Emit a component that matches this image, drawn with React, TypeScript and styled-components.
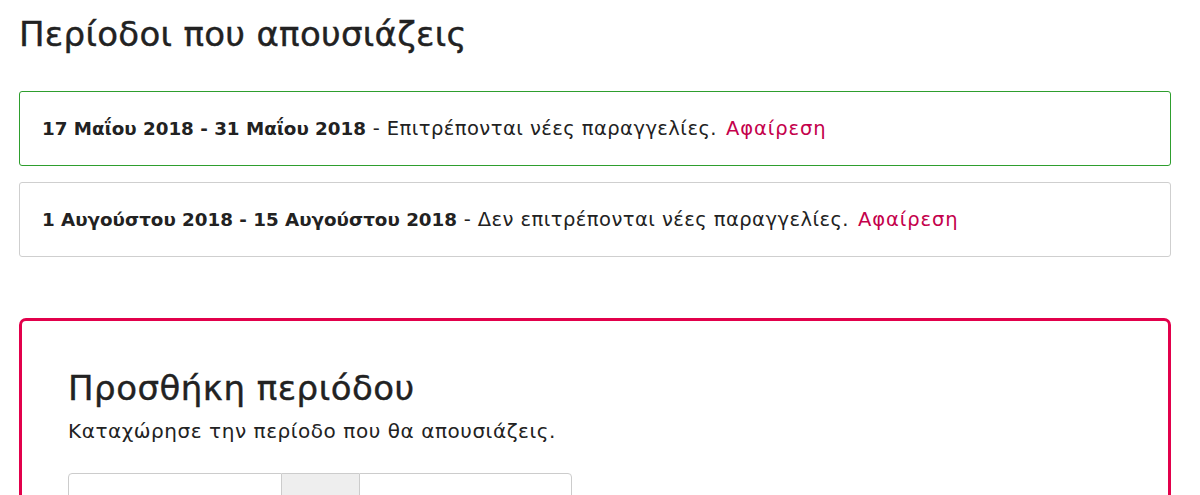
import styled, { createGlobalStyle } from "styled-components";

const GlobalStyle = createGlobalStyle`
  body {
    margin: 0;
    background: #fff;
    color: #222;
    font-family: "DejaVu Sans", Verdana, sans-serif;
  }
`;

const Page = styled.div`
  padding: 0 29px 0 19px;
`;

const Title = styled.h1`
  margin: 0;
  padding-top: 16px;
  font-size: 34px;
  font-weight: 400;
  letter-spacing: 0.3px;
  line-height: 37px;
  color: #222;
  -webkit-text-stroke: 0.4px #222;
`;

const PeriodList = styled.div`
  display: flex;
  flex-direction: column;
  gap: 16px;
  margin-top: 38px;
`;

const PeriodCard = styled.div<{ $active?: boolean }>`
  border: 1px solid ${(p) => (p.$active ? "#2e9e2e" : "#cfcfcf")};
  border-radius: 3px;
  padding: 24px 22px;
  font-size: 19.5px;
  letter-spacing: 0.45px;
  line-height: 25px;
`;

const Dates = styled.strong`
  font-weight: 700;
  font-size: 18.3px;
  letter-spacing: 0;
`;

const RemoveLink = styled.a`
  color: #c4004b;
  text-decoration: none;
  margin-left: 9px;
  letter-spacing: 0.9px;
  cursor: pointer;
`;

const AddBox = styled.section`
  margin-top: 61px;
  border: 3px solid #e2004b;
  border-radius: 7px;
  padding: 49px 46px 40px;
`;

const AddTitle = styled.h2`
  margin: 0;
  font-size: 34px;
  font-weight: 400;
  letter-spacing: 0.5px;
  line-height: 36px;
  color: #222;
  -webkit-text-stroke: 0.4px #222;
`;

const Hint = styled.p`
  margin: 13px 0 0;
  font-size: 20px;
  letter-spacing: 0.55px;
  line-height: 25px;
`;

const DateGroup = styled.div`
  display: flex;
  width: 504px;
  margin-top: 29px;
`;

const DateInput = styled.input`
  flex: 1;
  width: 0;
  min-width: 0;
  height: 44px;
  border: 1px solid #ccc;
  padding: 0 12px;
  font-size: 16px;
  font-family: inherit;
  box-sizing: border-box;
  &:first-child {
    border-radius: 4px 0 0 4px;
  }
  &:last-child {
    border-radius: 0 4px 4px 0;
  }
`;

const Addon = styled.span`
  width: 77px;
  flex: none;
  height: 44px;
  box-sizing: border-box;
  background: #eee;
  border-top: 1px solid #ccc;
  border-bottom: 1px solid #ccc;
`;

const periods = [
  {
    dates: "17 Μαΐου 2018 - 31 Μαΐου 2018",
    note: "Επιτρέπονται νέες παραγγελίες.",
    active: true,
  },
  {
    dates: "1 Αυγούστου 2018 - 15 Αυγούστου 2018",
    note: "Δεν επιτρέπονται νέες παραγγελίες.",
    active: false,
  },
];

const App = () => {
  return (
    <>
      <GlobalStyle />
      <Page>
        <Title>Περίοδοι που απουσιάζεις</Title>
        <PeriodList>
          {periods.map((p) => (
            <PeriodCard key={p.dates} $active={p.active}>
              <Dates>{p.dates}</Dates> - {p.note}
              <RemoveLink>Αφαίρεση</RemoveLink>
            </PeriodCard>
          ))}
        </PeriodList>
        <AddBox>
          <AddTitle>Προσθήκη περιόδου</AddTitle>
          <Hint>Καταχώρησε την περίοδο που θα απουσιάζεις.</Hint>
          <DateGroup>
            <DateInput type="text" />
            <Addon />
            <DateInput type="text" />
          </DateGroup>
        </AddBox>
      </Page>
    </>
  );
};

export default App;
